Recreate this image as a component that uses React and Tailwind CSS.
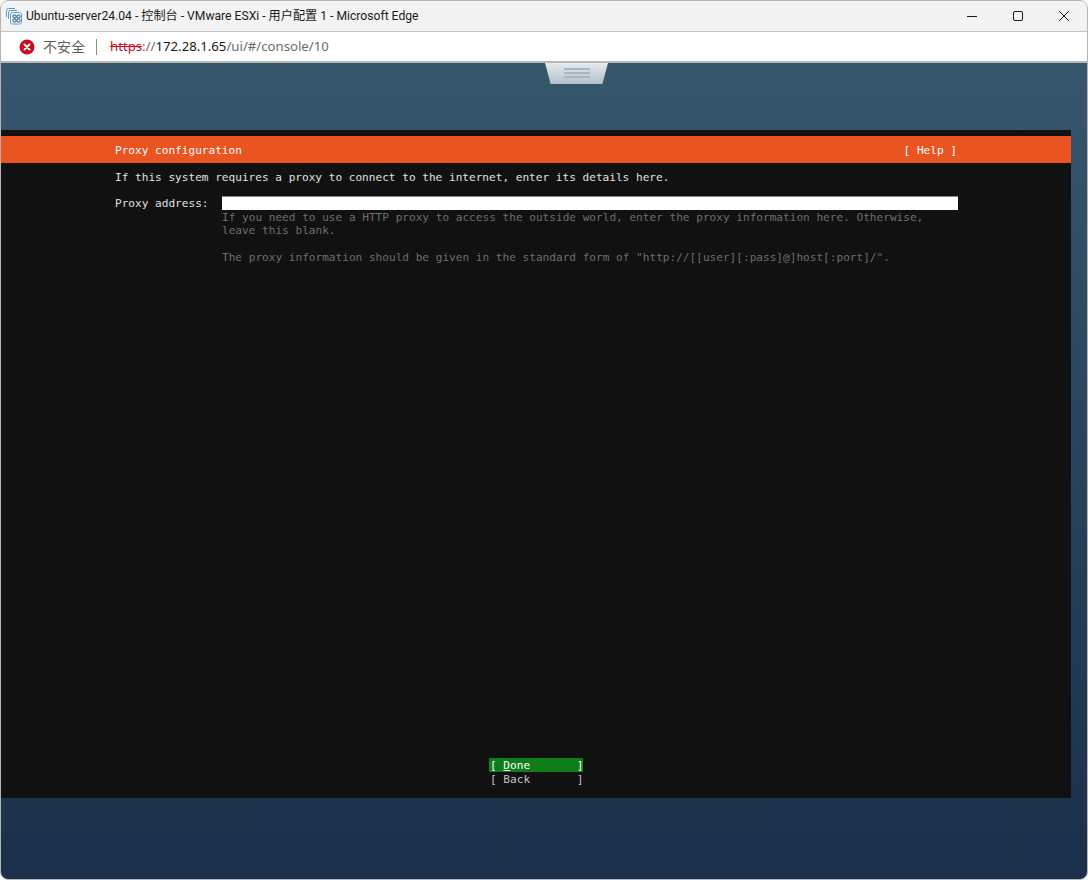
import React from 'react';

const uiFont = "font-['Noto_Sans','Noto_Sans_CJK_SC',sans-serif]";
const titleFont = "font-['Roboto','Noto_Sans_CJK_SC',sans-serif]";
const termFont = "font-['DejaVu_Sans_Mono',monospace]";

function TabIcon() {
  return (
    <svg width="18" height="18" viewBox="0 0 18 18" fill="none" className="shrink-0">
      <path d="M1.5 10V3.5a2 2 0 0 1 2-2H10" stroke="#5b9bd5" strokeWidth="1" />
      <path d="M3.5 12V5.5a2 2 0 0 1 2-2H12" stroke="#5b9bd5" strokeWidth="1" />
      <rect x="5.5" y="5.5" width="11" height="11.5" rx="2" fill="#fff" stroke="#5b9bd5" />
      <rect x="8" y="8" width="3" height="3" rx="0.8" stroke="#1f4e8c" />
      <rect x="12" y="8" width="3" height="3" rx="0.8" stroke="#1f4e8c" />
      <rect x="8" y="12" width="3" height="3" rx="0.8" stroke="#1f4e8c" />
      <rect x="12" y="12" width="3" height="3" rx="0.8" stroke="#1f4e8c" />
    </svg>
  );
}

function WindowButtons() {
  return (
    <div className="ml-auto flex items-center text-[#1a1a1a]">
      <svg width="12" height="12" viewBox="0 0 12 12" className="mr-[34px]">
        <path d="M1 6.5h10" stroke="currentColor" strokeWidth="1" />
      </svg>
      <svg width="12" height="12" viewBox="0 0 12 12" className="mr-[34px]">
        <rect x="1.5" y="1.5" width="9" height="9" rx="1.5" fill="none" stroke="currentColor" />
      </svg>
      <svg width="12" height="12" viewBox="0 0 12 12" className="mr-[17px]">
        <path d="M1 1l10 10M11 1L1 11" stroke="currentColor" strokeWidth="1" />
      </svg>
    </div>
  );
}

export default function App() {
  return (
    <div className="flex h-[880px] w-[1088px] flex-col overflow-hidden rounded-lg border border-[#b4b4b4] bg-white">
      {/* Title bar */}
      <div className={`flex h-[30px] shrink-0 items-center bg-[#f3f3f3] pl-[4px] ${titleFont}`}>
        <TabIcon />
        <span className="ml-[3px] whitespace-pre text-[12.15px] text-[#1a1a1a]">
          Ubuntu-server24.04 - 控制台 - VMware ESXi - 用户配置 1 - Microsoft Edge
        </span>
        <WindowButtons />
      </div>

      {/* Address bar */}
      <div className={`flex h-[32px] shrink-0 items-center border-t border-b-2 border-t-[#c4c4c4] border-b-[#b9b9b9] bg-white pl-[18px] ${uiFont}`}>
        <svg width="16" height="16" viewBox="0 0 16 16" className="shrink-0">
          <circle cx="8" cy="8" r="7.5" fill="#c50f1f" />
          <path d="M5.5 5.5l5 5M10.5 5.5l-5 5" stroke="#fff" strokeWidth="1.8" strokeLinecap="round" />
        </svg>
        <span className="ml-[8px] text-[14px] text-[#5f5f5f]">不安全</span>
        <span className="ml-[11px] h-[16px] w-px bg-[#8a8a8a]" />
        <span className="ml-[13px] text-[13.2px]">
          <span className="text-[#c50f1f] line-through">https</span>
          <span className="text-[#6b6b6b]">://</span>
          <span className="text-[#1a1a1a]">172.28.1.65</span>
          <span className="text-[#6b6b6b]">/ui/#/console/10</span>
        </span>
      </div>

      {/* Console area */}
      <div className="relative flex min-h-0 flex-1 flex-col bg-gradient-to-b from-[#37576d] to-[#1b304a]">
        <div className="absolute left-[544px] top-0 h-[21px] w-[63px] bg-gradient-to-b from-[#e6eaed] to-[#b3c0ca] [clip-path:polygon(0_0,100%_0,91%_100%,9%_100%)]">
          <div className="mx-auto mt-[5px] flex w-[26px] flex-col gap-[2px]">
            <div className="h-[2px] bg-[#a9b5bf]" />
            <div className="h-[2px] bg-[#a9b5bf]" />
            <div className="h-[2px] bg-[#a9b5bf]" />
          </div>
        </div>

        <div className={`mt-[67px] flex h-[668px] w-[1070px] flex-col bg-[#111111] text-[11.1px] leading-[13.4px] text-[#e0e0e0] ${termFont}`}>
          <div className="mt-[6px] flex h-[27px] shrink-0 items-center justify-between bg-[#e95420] pl-[114px] pr-[114px] pt-[2px] text-white">
            <span>Proxy configuration</span>
            <span>[ Help ]</span>
          </div>

          <p className="mt-[8px] whitespace-pre pl-[114px]">If this system requires a proxy to connect to the internet, enter its details here.</p>

          <div className="mt-[12px] flex pl-[114px]">
            <span className="w-[107px] shrink-0 whitespace-pre pt-[1px]">Proxy address:</span>
            <div className="h-[14px] w-[736px] border-t border-[#8a8a8a] bg-white" />
          </div>

          <div className="whitespace-pre pl-[221px] text-[#6e6e6e]">
            <p>If you need to use a HTTP proxy to access the outside world, enter the proxy information here. Otherwise,</p>
            <p>leave this blank.</p>
            <p className="mt-[13.4px]">The proxy information should be given in the standard form of "http://[[user][:pass]@]host[:port]/".</p>
          </div>

          <div className="mt-auto mb-[12px] ml-[488px] w-[94px] whitespace-pre">
            <div className="h-[14px] bg-[#0e7d1a] px-[1px] pt-[1px] text-white">[ <span className="underline">D</span>one       ]</div>
            <div className="px-[1px] pt-[1px] text-[#c4c4c4]">[ Back       ]</div>
          </div>
        </div>
      </div>
    </div>
  );
}
